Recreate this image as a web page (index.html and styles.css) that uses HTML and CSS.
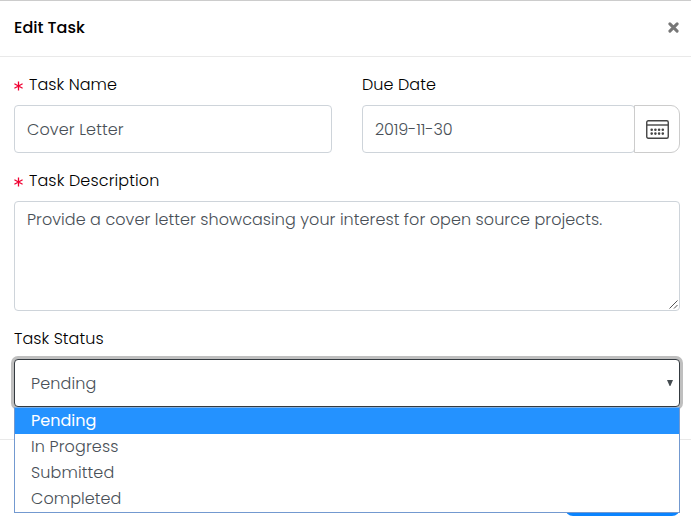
FILE: index.html
```html
<!DOCTYPE html>
<html lang="en">
<head>
<meta charset="utf-8">
<title>Edit Task</title>
<link rel="stylesheet" href="styles.css">
</head>
<body>
<div class="modal">
  <header class="modal-header">
    <h1 class="modal-title">Edit Task</h1>
    <svg class="close" width="11" height="11" viewBox="0 0 11 11"><path d="M1.9 1.9l7.2 7.2M9.1 1.9L1.9 9.1"/></svg>
  </header>
  <main class="modal-body">
    <div class="row">
      <div class="field">
        <div class="label"><svg class="required" width="9" height="10" viewBox="0 0 9 10"><path d="M4.5 .6v8.8M.4 2.8l8.2 4.4M8.6 2.8L.4 7.2"/></svg><span>Task Name</span></div>
        <div class="control"><span class="cover">Cover Letter</span></div>
      </div>
      <div class="field">
        <div class="label"><span>Due Date</span></div>
        <div class="date-group">
          <div class="control date"><span class="date-value">2019-11-30</span></div>
          <div class="calendar">
            <svg width="23" height="19" viewBox="0 0 23 19"><rect class="line" x=".75" y=".75" width="21.5" height="17.5" rx="1.5"/><path class="line" d="M1 5h21"/><path class="dots" d="M5.7 9.7h0M9.4 9.7h0M13.1 9.7h0M16.8 9.7h0M5.7 13.6h0M9.4 13.6h0M13.1 13.6h0M16.8 13.6h0"/></svg>
          </div>
        </div>
      </div>
    </div>
    <div class="field">
      <div class="label"><svg class="required" width="9" height="10" viewBox="0 0 9 10"><path d="M4.5 .6v8.8M.4 2.8l8.2 4.4M8.6 2.8L.4 7.2"/></svg><span class="description">Task Description</span></div>
      <div class="control textarea"><span>Provide a cover letter showcasing your interest for open source projects.</span>
        <svg class="grip" width="9" height="9" viewBox="0 0 9 9"><path d="M.5 8.5l8-8M5 8.5L8.5 5"/></svg>
      </div>
    </div>
    <div class="field">
      <div class="label"><span>Task Status</span></div>
      <div class="control select"><span>Pending</span>
        <svg class="arrow" width="6" height="6" viewBox="0 0 6 6"><path d="M0 0h6L3.4 6h-.8z"/></svg>
        <ul class="menu">
          <li class="active">Pending</li>
          <li>In Progress</li>
          <li>Submitted</li>
          <li class="completed">Completed</li>
        </ul>
      </div>
    </div>
  </main>
  <footer class="modal-footer"><div class="button"></div></footer>
</div>
</body>
</html>
```
FILE: styles.css
```css
* { box-sizing: border-box; }
body { margin: 0; background: #fff; color: #000; font: 300 16px/24px Poppins, Inter, "Open Sans", sans-serif; letter-spacing: .06px; white-space: nowrap; overflow: hidden; }
.modal { height: 527px; border-top: 1px solid #ccc; }
.modal-header { height: 56px; padding: 0 12px 2px 14px; border-bottom: 1px solid #e9e9e9; display: flex; align-items: center; justify-content: space-between; }
.modal-title { margin: 0; font-size: 16px; font-weight: 500; letter-spacing: 0; }
.close { stroke: #777; stroke-width: 3; stroke-linecap: round; fill: none; }
.modal-body { height: 382px; padding: 16px 11px 0 14px; }
.row { display: grid; grid-template-columns: 318px 318px; gap: 30px; }
.field { margin-bottom: 16px; }
.row .field { width: 318px; }
.label { height: 24px; margin-bottom: 8px; display: flex; align-items: center; }
.required { margin: 2px 6px 0 0; stroke: #f00032; stroke-width: 1.3; fill: none; }
.control { height: 48px; width: 100%; padding: 2px 12px 0; border: 1px solid #ced4da; border-radius: 4px; color: #495057; display: flex; align-items: center; background: #fff; }
.cover { letter-spacing: .12px; }
.description { letter-spacing: .12px; }
.date-group { display: flex; }
.date { width: 273px; }
.date-value { letter-spacing: -.14px; }
.calendar { width: 46px; height: 48px; margin-left: -1px; border: 1px solid #ccc; border-radius: 0 9px 9px 0; display: flex; align-items: center; justify-content: center; }
.line { fill: none; stroke: #444; stroke-width: 1.4; }
.dots { fill: none; stroke: #444; stroke-width: 2.6; stroke-linecap: round; }
.textarea { position: relative; width: 666px; height: 110px; padding-top: 6px; align-items: flex-start; }
.grip { position: absolute; right: 1px; bottom: 1px; stroke: #555; stroke-width: 1; fill: none; }
.select { position: relative; width: 666px; padding: 2px 6px 0 16px; justify-content: space-between; border-color: #343a40; box-shadow: 0 0 0 3px #bfbfbf; letter-spacing: .12px; }
.arrow { margin-top: -2px; fill: #444b50; }
.menu { position: absolute; z-index: 2; top: 47px; left: -1px; width: 666px; height: 106px; margin: 0; padding: 0; list-style: none; border: 1px solid #7399d0; border-top-color: #7bafe8; background: #fff; color: #495057; }
.menu li { height: 26px; padding-left: 16px; line-height: 26px; }
.menu .active { background: #2492ff; color: #fff; font-weight: 400; letter-spacing: 0; }
.menu .completed { letter-spacing: .06px; }
.modal-footer { height: 77px; border-top: 1px solid #e9e9e9; padding: 28px 11px 0; display: flex; justify-content: flex-end; }
.button { width: 115px; height: 48px; border-radius: 8px; background: #0a84ff; }
```
